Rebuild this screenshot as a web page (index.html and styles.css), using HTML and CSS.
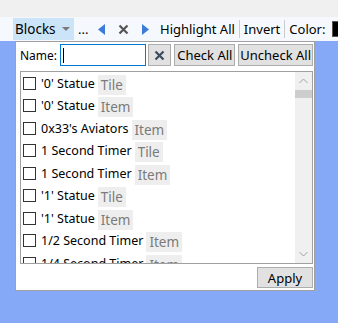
FILE: index.html
```html
<!DOCTYPE html>
<html lang="en">
<head>
    <meta charset="UTF-8">
    <title>Blocks filter</title>
    <link rel="stylesheet" href="styles.css">
</head>
<body>
    <div class="top-gap"></div>
    <div class="toolbar">
        <span class="gripper"></span>
        <span class="tb-drop">Blocks <span class="caret"></span></span>
        <span class="tb-item dots">...</span>
        <span class="tb-item arrow">
            <svg width="7" height="11" viewBox="0 0 7 11"><path d="M7 0 L0 5.5 L7 11 Z" fill="#3a7cd8"/></svg>
        </span>
        <span class="tb-item arrow">
            <svg width="11" height="11" viewBox="0 0 11 11"><path d="M1.5 1.5 L9.5 9.5 M9.5 1.5 L1.5 9.5" stroke="#555" stroke-width="2.2"/></svg>
        </span>
        <span class="tb-item arrow">
            <svg width="7" height="11" viewBox="0 0 7 11"><path d="M0 0 L7 5.5 L0 11 Z" fill="#3a7cd8"/></svg>
        </span>
        <span class="tb-item text">Highlight All</span>
        <span class="sep"></span>
        <span class="tb-item text">Invert</span>
        <span class="sep"></span>
        <span class="tb-item text">Color:</span>
        <span class="swatch"></span>
    </div>
    <div class="workspace">
        <div class="popup">
            <div class="name-row">
                <label class="name-label">Name:</label>
                <span class="name-input"><span class="cursor"></span></span>
                <button class="btn clear-btn">
                    <svg width="11" height="11" viewBox="0 0 11 11"><path d="M1.5 1.5 L9.5 9.5 M9.5 1.5 L1.5 9.5" stroke="#3c4a5e" stroke-width="2.2"/></svg>
                </button>
                <button class="btn check-btn">Check All</button>
                <button class="btn uncheck-btn">Uncheck All</button>
            </div>
            <div class="list">
                <div class="rows">
                    <div class="row"><span class="box"></span><span class="label">'0' Statue</span><span class="tag">Tile</span></div>
                    <div class="row"><span class="box"></span><span class="label">'0' Statue</span><span class="tag">Item</span></div>
                    <div class="row"><span class="box"></span><span class="label">0x33's Aviators</span><span class="tag">Item</span></div>
                    <div class="row"><span class="box"></span><span class="label">1 Second Timer</span><span class="tag">Tile</span></div>
                    <div class="row"><span class="box"></span><span class="label">1 Second Timer</span><span class="tag">Item</span></div>
                    <div class="row"><span class="box"></span><span class="label">'1' Statue</span><span class="tag">Tile</span></div>
                    <div class="row"><span class="box"></span><span class="label">'1' Statue</span><span class="tag">Item</span></div>
                    <div class="row"><span class="box"></span><span class="label">1/2 Second Timer</span><span class="tag">Item</span></div>
                    <div class="row"><span class="box"></span><span class="label">1/4 Second Timer</span><span class="tag">Item</span></div>
                </div>
                <div class="scrollbar">
                    <svg class="chev" width="9" height="6" viewBox="0 0 9 6"><path d="M0.5 5 L4.5 1 L8.5 5" fill="none" stroke="#a0a0a0" stroke-width="1"/></svg>
                    <div class="thumb"></div>
                    <div class="track"></div>
                    <svg class="chev" width="9" height="6" viewBox="0 0 9 6"><path d="M0.5 1 L4.5 5 L8.5 1" fill="none" stroke="#a0a0a0" stroke-width="1"/></svg>
                </div>
            </div>
            <div class="footer">
                <button class="btn apply-btn">Apply</button>
            </div>
        </div>
    </div>
</body>
</html>
```
FILE: styles.css
```css
* {
    box-sizing: border-box;
}

body {
    margin: 0;
    font-family: 'Noto Sans', sans-serif;
    font-size: 12px;
    color: #000;
    background-color: #f0f0f0;
    height: 323px;
    overflow: hidden;
}

.top-gap {
    height: 17px;
}

.toolbar {
    height: 24px;
    background-color: #f5f9fe;
    display: flex;
    align-items: center;
    white-space: nowrap;
    overflow: hidden;
}

.gripper {
    width: 2px;
    height: 16px;
    margin-left: 11px;
    margin-right: 2px;
    background-image: radial-gradient(circle, #8c8c8c 0.8px, transparent 1px);
    background-size: 2px 4px;
}

.tb-drop {
    flex: none;
    height: 22px;
    width: 61px;
    display: flex;
    align-items: center;
    padding-left: 2px;
    background-color: #cce4f7;
    font-size: 13.5px;
}

.caret {
    margin-left: 6px;
    border-left: 4px solid transparent;
    border-right: 4px solid transparent;
    border-top: 4px solid #7a7a7a;
}

.tb-item {
    flex: none;
    display: flex;
    align-items: center;
    font-size: 13px;
}

.dots {
    margin-left: 4px;
    width: 12px;
}

.arrow {
    width: 22px;
    justify-content: center;
}

.text {
    padding: 0 4px;
}

.sep {
    flex: none;
    width: 1px;
    height: 18px;
    background-color: #c8ccd2;
}

.swatch {
    flex: none;
    width: 18px;
    height: 16px;
    margin-left: 3px;
    background-color: #000;
    border: 1px solid #555;
}

.workspace {
    height: 282px;
    background-color: #85a9f6;
    padding-left: 15px;
}

.popup {
    width: 300px;
    height: 250px;
    background-color: #fff;
    border: 1px solid #a0a0a0;
    padding: 2px 1px 0 4px;
    display: flex;
    flex-direction: column;
}

.name-row {
    display: flex;
    align-items: center;
    height: 22px;
}

.name-label {
    width: 40px;
}

.name-input {
    width: 86px;
    height: 22px;
    border: 1px solid #0078d7;
    display: flex;
    align-items: center;
    padding-left: 2px;
}

.cursor {
    width: 1px;
    height: 15px;
    background-color: #000;
}

.btn {
    font-family: 'Noto Sans', sans-serif;
    font-size: 13px;
    height: 22px;
    padding: 0;
    background-color: #e1e1e1;
    border: 1px solid #adadad;
    color: #000;
    display: flex;
    align-items: center;
    justify-content: center;
}

.clear-btn {
    width: 24px;
    margin-left: 2px;
}

.check-btn {
    width: 61px;
    margin-left: 3px;
}

.uncheck-btn {
    width: 75px;
    margin-left: 3px;
}

.list {
    margin-top: 5px;
    height: 193px;
    border: 1px solid #a0a0a0;
    display: flex;
    overflow: hidden;
}

.rows {
    flex: 1;
    padding-left: 2px;
    overflow: hidden;
}

.row {
    height: 22.5px;
    display: flex;
    align-items: center;
    white-space: nowrap;
}

.box {
    flex: none;
    width: 13px;
    height: 13px;
    border: 1px solid #333;
    margin-right: 5px;
}

.label {
    font-size: 12.5px;
}

.tag {
    margin-left: 3px;
    margin-top: 3px;
    height: 20px;
    padding: 0 3px;
    display: flex;
    align-items: center;
    background-color: #eeeeee;
    color: #7a7a7a;
    font-size: 13.5px;
}

.scrollbar {
    width: 17px;
    background-color: #f0f0f0;
    display: flex;
    flex-direction: column;
    align-items: center;
}

.chev {
    margin: 6px 0;
}

.thumb {
    width: 17px;
    height: 8px;
    background-color: #cdcdcd;
}

.track {
    flex: 1;
}

.footer {
    display: flex;
    justify-content: flex-end;
    padding-top: 3px;
}

.apply-btn {
    width: 56px;
    height: 21px;
}
```
